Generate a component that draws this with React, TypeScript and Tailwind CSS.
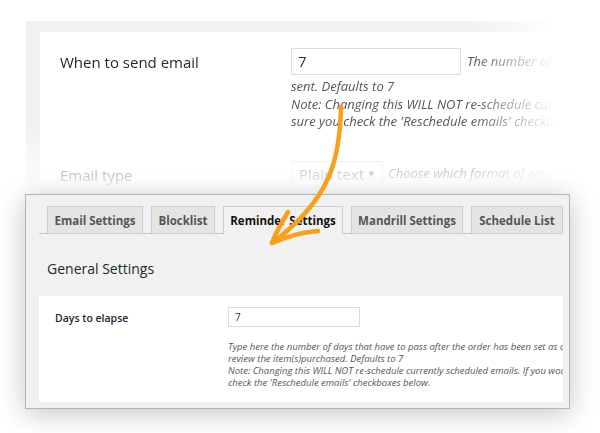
export default function App() {
  const tabs = [
    { label: 'Email Settings', w: 'w-[96px]' },
    { label: 'Blocklist', w: 'w-[64px]' },
    { label: 'Reminder Settings', w: 'w-[120px]' },
    { label: 'Mandrill Settings', w: 'w-[112px]' },
    { label: 'Schedule List', w: 'w-[92px]' },
  ];

  return (
    <div className="relative w-[600px] h-[433px] overflow-hidden bg-white font-['Open_Sans',sans-serif]">
      {/* Zoomed-in crop of the settings page, fading out */}
      <div className="h-[194px] [mask-image:linear-gradient(to_right,#000_470px,transparent_555px)]">
        <div className="h-full pt-[21px] pl-[26px] [mask-image:linear-gradient(to_bottom,#000_125px,transparent_192px)]">
          <div className="h-full bg-[#f1f1f1] pt-[11px] pl-[14px]">
            <div className="h-full bg-white pl-5 pt-4">
              <div className="flex">
                <div className="w-[231px] shrink-0 pt-[3px] text-[15px] leading-[22px] text-[#23282d]">When to send email</div>
                <div className="flex-1 min-w-0">
                  <div className="flex items-center gap-[6px]">
                    <div className="w-[170px] h-[27px] shrink-0 border border-[#ddd] px-[6px] text-[15px] leading-[25px] text-[#333]">7</div>
                    <span className="italic text-[13px] text-[#555] whitespace-nowrap">The number of days that have to pass</span>
                  </div>
                  <div className="mt-[3px] italic text-[13px] leading-[17.5px] text-[#555] whitespace-nowrap">
                    <div>sent. Defaults to 7</div>
                    <div>Note: Changing this WILL NOT re-schedule currently scheduled emails</div>
                    <div>sure you check the 'Reschedule emails' checkboxes below.</div>
                  </div>
                </div>
              </div>

              <div className="flex mt-[30px]">
                <div className="w-[231px] shrink-0 pt-[3px] text-[15px] leading-[22px] text-[#23282d]">Email type</div>
                <div className="flex items-center gap-[5px]">
                  <div className="w-[92px] h-[27px] shrink-0 border border-[#ddd] pl-[7px] pr-[6px] flex items-center justify-between text-[15px] text-[#666]">
                    <span>Plain text</span>
                    <span className="text-[9px] text-[#555]">▼</span>
                  </div>
                  <span className="italic text-[13px] text-[#555] whitespace-nowrap">Choose which format of email to send</span>
                </div>
              </div>
            </div>
          </div>
        </div>
      </div>

      {/* Settings window */}
      <div className="ml-[25px] w-[545px] h-[215px] border border-[#b4b4b4] bg-[#f1f1f1] pl-[13px] pr-[6px] pt-[12px] shadow-[0_4px_26px_rgba(0,0,0,0.24)]">
        <div className="flex items-end gap-2 pl-2 border-b border-[#ccc] h-[27px]">
          {tabs.map((t) => {
            const active = t.label === 'Reminder Settings';
            return (
              <div
                key={t.label}
                className={
                  active
                    ? `${t.w} h-[28px] -mb-px shrink-0 border border-b-0 border-[#ccc] bg-[#f1f1f1] text-center text-[11.5px] font-bold leading-[28px] text-[#111] whitespace-nowrap`
                    : `${t.w} h-[27px] shrink-0 border border-b-0 border-[#ccc] bg-[#e4e4e4] text-center text-[11.5px] font-bold leading-[27px] text-[#555] whitespace-nowrap`
                }
              >
                {t.label}
              </div>
            );
          })}
        </div>

        <div className="h-[62px] pt-[25px] pl-2 text-[14px] leading-[20px] text-[#23282d]">General Settings</div>

        <div className="h-[106px] bg-white flex pt-[11px] overflow-hidden">
          <div className="w-[189px] shrink-0 pl-4 pt-[3px] text-[10.5px] font-semibold leading-[16px] text-[#23282d]">Days to elapse</div>
          <div className="min-w-0">
            <div className="w-[132px] h-[20px] border border-[#ddd] px-[6px] text-[10px] leading-[18px] text-[#333]">7</div>
            <div className="mt-[14px] italic text-[9.5px] leading-[12px] text-[#555] whitespace-nowrap">
              <div>Type here the number of days that have to pass after the order has been set as completed</div>
              <div>review the item(s)purchased. Defaults to 7</div>
              <div>Note: Changing this WILL NOT re-schedule currently scheduled emails. If you would like</div>
              <div>check the 'Reschedule emails' checkboxes below.</div>
            </div>
          </div>
        </div>
      </div>

      {/* Orange hand-drawn arrow */}
      <svg className="absolute inset-0 pointer-events-none" width="600" height="433" viewBox="0 0 600 433" fill="none">
        <path d="M341 107 C340 160 330 200 272 243" stroke="#f8a01a" strokeWidth="4.5" strokeLinecap="round" />
        <path d="M272 243 C276 232 282 222 288 212" stroke="#f8a01a" strokeWidth="4.5" strokeLinecap="round" />
        <path d="M272 243 C288 236 302 232 318 231" stroke="#f8a01a" strokeWidth="4.5" strokeLinecap="round" />
      </svg>
    </div>
  );
}
